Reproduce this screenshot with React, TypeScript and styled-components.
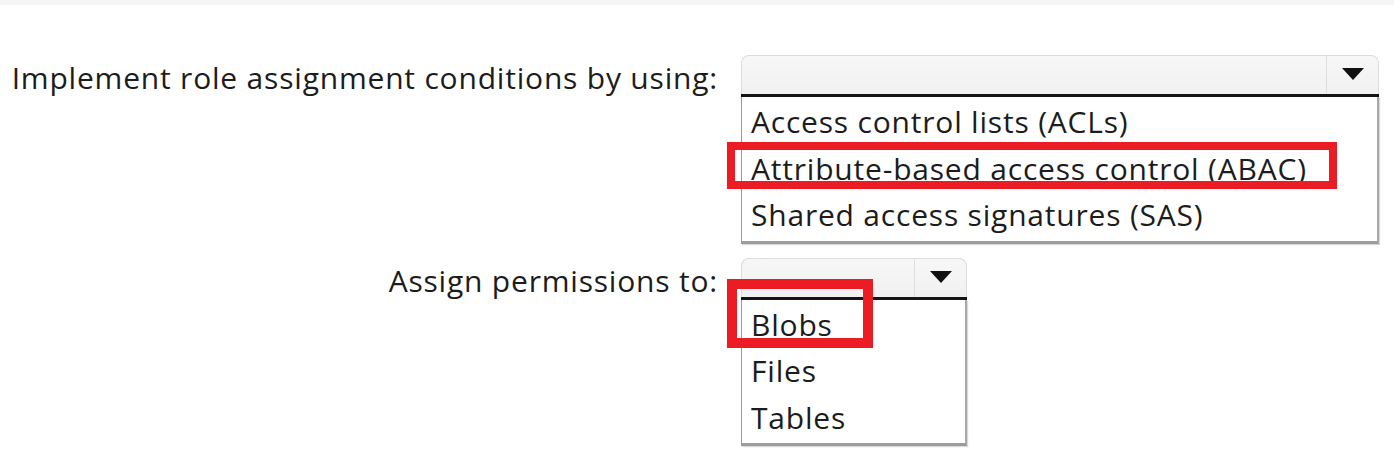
import React from "react";
import styled, { createGlobalStyle } from "styled-components";

const GlobalStyle = createGlobalStyle`
  html, body { margin: 0; padding: 0; background: #ffffff; }
  body {
    font-family: "Open Sans", "Noto Sans", Arial, sans-serif;
    color: #1c1c1c;
    width: 1394px;
    height: 468px;
    overflow: hidden;
  }
`;

const TopBand = styled.div`
  height: 5px;
  background: #f4f5f7;
`;

const Form = styled.div`
  display: grid;
  grid-template-columns: 718px auto;
  column-gap: 23px;
  row-gap: 14px;
  padding-top: 50px;
  align-items: start;
`;

const Label = styled.div`
  text-align: right;
  font-size: 30px;
  line-height: 40px;
  padding-top: 3px;
  white-space: nowrap;
  letter-spacing: 0.8px;
`;

const Select = styled.div<{ $width: number }>`
  width: ${(p) => p.$width}px;
  display: flex;
  flex-direction: column;
`;

const Header = styled.div`
  height: 39px;
  display: flex;
  background: linear-gradient(#f7f7f7, #f1f1f1);
  border: 1px solid #dcdcdc;
  border-bottom: none;
  border-radius: 8px 8px 0 0;
  box-sizing: border-box;
`;

const Field = styled.div`
  flex: 1;
`;

const ArrowBox = styled.div`
  width: 52px;
  border-left: 1px solid #dedede;
  display: flex;
  align-items: center;
  justify-content: center;
  padding-bottom: 2px;
  box-sizing: border-box;
`;

const Rule = styled.div`
  height: 3px;
  background: #151515;
`;

const List = styled.ul`
  list-style: none;
  margin: 0;
  padding: 2px 0 2px;
  background: #ffffff;
  border-left: 1px solid #9a9a9a;
  border-right: 2px solid #a8a8a8;
  border-bottom: 3px solid #9c9c9c;
  box-shadow: 1px 1px 1px rgba(0, 0, 0, 0.15);
`;

const Option = styled.li`
  position: relative;
  height: 46.5px;
  line-height: 46px;
  padding-left: 9px;
  font-size: 30px;
  white-space: nowrap;
  letter-spacing: 0.8px;
`;

const Highlight = styled.span<{ $l: number; $t: number; $w: number; $h: number; $b: number }>`
  position: absolute;
  left: ${(p) => p.$l}px;
  top: ${(p) => p.$t}px;
  width: ${(p) => p.$w}px;
  height: ${(p) => p.$h}px;
  border: ${(p) => p.$b}px solid #ec1c24;
  box-sizing: border-box;
  pointer-events: none;
`;

const Arrow = () => (
  <svg width="22" height="12" viewBox="0 0 22 12">
    <path d="M0 0 H22 L11 12 Z" fill="#111" />
  </svg>
);

type Box = { l: number; t: number; w: number; h: number; b: number };

const Dropdown = ({
  width,
  options,
  marked,
  box,
}: {
  width: number;
  options: string[];
  marked: number;
  box: Box;
}) => (
  <Select $width={width}>
    <Header>
      <Field />
      <ArrowBox>
        <Arrow />
      </ArrowBox>
    </Header>
    <Rule />
    <List>
      {options.map((o, i) => (
        <Option key={o}>
          {o}
          {i === marked && <Highlight $l={box.l} $t={box.t} $w={box.w} $h={box.h} $b={box.b} />}
        </Option>
      ))}
    </List>
  </Select>
);

export default function App() {
  return (
    <>
      <GlobalStyle />
      <TopBand />
      <Form>
        <Label>Implement role assignment conditions by using:</Label>
        <Dropdown
          width={638}
          options={[
            "Access control lists (ACLs)",
            "Attribute-based access control (ABAC)",
            "Shared access signatures (SAS)",
          ]}
          marked={1}
          box={{ l: -15, t: -4, w: 610, h: 47, b: 8 }}
        />
        <Label>Assign permissions to:</Label>
        <Dropdown
          width={226}
          options={["Blobs", "Files", "Tables"]}
          marked={0}
          box={{ l: -15, t: -23, w: 146, h: 69, b: 10 }}
        />
      </Form>
    </>
  );
}
